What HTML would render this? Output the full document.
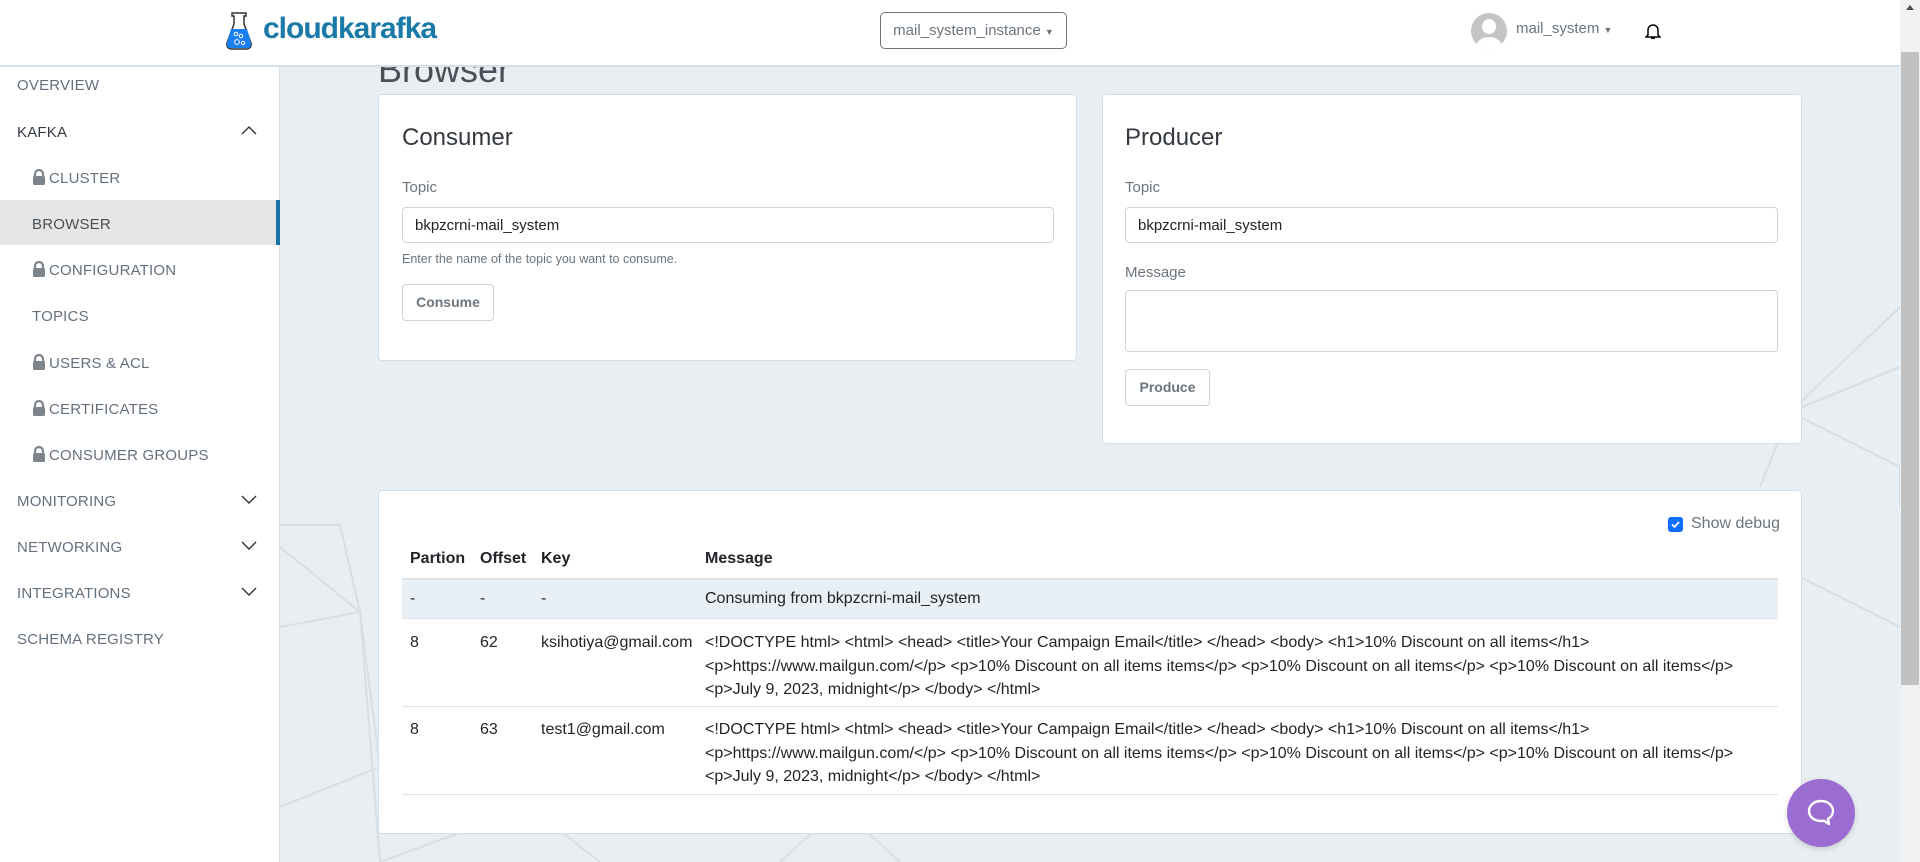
<!DOCTYPE html>
<html><head><meta charset="utf-8">
<style>
*{box-sizing:border-box;margin:0;padding:0}
body{width:1920px;height:862px;overflow:hidden;background:#e8eef2;font-family:"Liberation Sans",sans-serif;position:relative;color:#212529}
.hdr{position:absolute;left:0;top:0;width:1900px;height:67px;background:#fff;border-bottom:2px solid #d5e0e8;z-index:5}
.side{position:absolute;left:0;top:67px;width:280px;height:795px;background:#fff;border-right:1px solid #d5dde3;z-index:3}
.si{position:absolute;left:17px;font-size:15px;color:#65707d;letter-spacing:0.2px}
.si.sub{left:32px}
.lock{display:inline-block;width:14px;height:16px;vertical-align:-2px;margin-right:3px}
.chev{position:absolute;left:241px;width:16px;height:10px}
.card{position:absolute;background:#fff;border:1px solid #d6dee5;border-radius:4px}
.h{position:absolute;font-size:24px;color:#343a40}
.lbl{position:absolute;font-size:15px;color:#6c757d}
.inp{position:absolute;border:1px solid #ced4da;border-radius:4px;background:#fff;font-size:15px;color:#212529;padding:9px 12px}
.btn{position:absolute;border:1px solid #ced4da;border-radius:4px;font-size:14px;font-weight:bold;color:#6c757d;text-align:center;line-height:35px}
.t{position:absolute;font-size:16px;color:#212529;white-space:nowrap}
.b{font-weight:bold}
.line{position:absolute;height:1px;background:#dee2e6;left:402px;width:1376px}
</style></head><body>
<svg style="position:absolute;left:280px;top:67px" width="1620" height="795">
<g stroke="#d7dfe4" stroke-width="2" fill="none">
<polyline points="0,458 60,458 80,545 0,560"/>
<polyline points="0,480 80,545 100,700 0,740"/>
<polyline points="80,545 100,795"/>
<polyline points="1480,420 1510,345 1620,300"/>
<polyline points="1510,345 1620,400 1620,440"/>
<polyline points="1510,345 1620,240"/>
<polyline points="1480,490 1620,560"/>
<polyline points="100,795 250,740 320,795"/>
<polyline points="500,795 560,740 620,795"/>
</g></svg>
<div class="hdr">
<svg style="position:absolute;left:226px;top:12px" width="26" height="38" viewBox="0 0 26 38">
<path d="M6 1h14v3h-2v8l7 19q1 5-4 6H5q-5-1-4-6l7-19V4H6z" fill="#fff" stroke="#333" stroke-width="1.5"/>
<path d="M5 17h16l4 14q1 5-4 5H5q-5 0-4-5z" fill="#1a7ff0"/>
<circle cx="10" cy="22" r="1.8" fill="none" stroke="#fff"/><circle cx="15" cy="24" r="1.8" fill="none" stroke="#fff"/><circle cx="11" cy="30" r="2.4" fill="none" stroke="#fff"/><circle cx="17" cy="31" r="1.6" fill="none" stroke="#fff"/>
</svg>
<div style="position:absolute;left:263px;top:12px;font-size:30px;font-weight:bold;color:#1b79a8;letter-spacing:-1px">cloudkarafka</div>
<div style="position:absolute;left:880px;top:12px;width:187px;height:37px;border:1px solid #6c757d;border-radius:5px;font-size:15px;color:#6c757d;text-align:center;line-height:35px">mail_system_instance <span style="font-size:9px">▼</span></div>
<div style="position:absolute;left:1471px;top:13px;width:36px;height:36px;border-radius:50%;background:#c4c4c4;overflow:hidden">
<div style="position:absolute;left:11px;top:6px;width:14px;height:15px;border-radius:50%;background:#fff"></div>
<div style="position:absolute;left:5px;top:24px;width:26px;height:20px;border-radius:50%;background:#fff"></div></div>
<div style="position:absolute;left:1516px;top:20px;font-size:15px;color:#6c757d">mail_system <span style="font-size:9px">▼</span></div>
<svg style="position:absolute;left:1645px;top:22px" width="16" height="18" viewBox="0 0 16 18"><path d="M3 13V8a5 5 0 0 1 10 0v5l2 2H1z" fill="none" stroke="#000" stroke-width="1.5"/><path d="M6 16h4" stroke="#000" stroke-width="1.8"/></svg>
</div>
<div style="position:absolute;left:1900px;top:0;width:20px;height:862px;background:#f1f1f1;z-index:6">
<div style="position:absolute;left:1px;top:52px;width:18px;height:633px;background:#c1c1c1"></div>
<div style="position:absolute;left:6px;top:5px;border:4px solid transparent;border-bottom:5px solid #505050;border-top:0"></div></div>

<div style="position:absolute;left:378px;top:52px;font-size:36px;line-height:36px;color:#495057;z-index:1">Browser</div>

<div class="side">
<div class="si" style="top:10px">OVERVIEW</div>
<div class="si" style="top:57px;color:#343a40">KAFKA</div>
<svg class="chev" style="top:58px" viewBox="0 0 16 10"><path d="M1 9l7-7 7 7" stroke="#333" stroke-width="1.4" fill="none"/></svg>
<div class="si sub" style="top:102px"><svg class="lock" viewBox="0 0 14 16"><path d="M3 7V5a4 4 0 0 1 8 0v2" stroke="#7d848c" stroke-width="2.2" fill="none"/><rect x="1" y="7" width="12" height="9" rx="1.5" fill="#7d848c"/></svg>CLUSTER</div>
<div style="position:absolute;left:0;top:133px;width:280px;height:45px;background:#e6e6e6;border-right:4px solid #1a73a8"></div>
<div class="si sub" style="top:149px;color:#495057">BROWSER</div>
<div class="si sub" style="top:194px"><svg class="lock" viewBox="0 0 14 16"><path d="M3 7V5a4 4 0 0 1 8 0v2" stroke="#7d848c" stroke-width="2.2" fill="none"/><rect x="1" y="7" width="12" height="9" rx="1.5" fill="#7d848c"/></svg>CONFIGURATION</div>
<div class="si sub" style="top:241px">TOPICS</div>
<div class="si sub" style="top:287px"><svg class="lock" viewBox="0 0 14 16"><path d="M3 7V5a4 4 0 0 1 8 0v2" stroke="#7d848c" stroke-width="2.2" fill="none"/><rect x="1" y="7" width="12" height="9" rx="1.5" fill="#7d848c"/></svg>USERS &amp; ACL</div>
<div class="si sub" style="top:333px"><svg class="lock" viewBox="0 0 14 16"><path d="M3 7V5a4 4 0 0 1 8 0v2" stroke="#7d848c" stroke-width="2.2" fill="none"/><rect x="1" y="7" width="12" height="9" rx="1.5" fill="#7d848c"/></svg>CERTIFICATES</div>
<div class="si sub" style="top:379px"><svg class="lock" viewBox="0 0 14 16"><path d="M3 7V5a4 4 0 0 1 8 0v2" stroke="#7d848c" stroke-width="2.2" fill="none"/><rect x="1" y="7" width="12" height="9" rx="1.5" fill="#7d848c"/></svg>CONSUMER GROUPS</div>
<div class="si" style="top:426px">MONITORING</div>
<svg class="chev" style="top:428px" viewBox="0 0 16 10"><path d="M1 1l7 7 7-7" stroke="#333" stroke-width="1.4" fill="none"/></svg>
<div class="si" style="top:472px">NETWORKING</div>
<svg class="chev" style="top:474px" viewBox="0 0 16 10"><path d="M1 1l7 7 7-7" stroke="#333" stroke-width="1.4" fill="none"/></svg>
<div class="si" style="top:518px">INTEGRATIONS</div>
<svg class="chev" style="top:520px" viewBox="0 0 16 10"><path d="M1 1l7 7 7-7" stroke="#333" stroke-width="1.4" fill="none"/></svg>
<div class="si" style="top:564px">SCHEMA REGISTRY</div>
</div>

<div class="card" style="left:378px;top:94px;width:699px;height:267px"></div>
<div class="h" style="left:402px;top:124px">Consumer</div>
<div class="lbl" style="left:402px;top:179px">Topic</div>
<div class="inp" style="left:402px;top:207px;width:652px;height:36px">bkpzcrni-mail_system</div>
<div style="position:absolute;left:402px;top:252px;font-size:12.5px;color:#6c757d">Enter the name of the topic you want to consume.</div>
<div class="btn" style="left:402px;top:284px;width:92px;height:37px">Consume</div>

<div class="card" style="left:1102px;top:94px;width:700px;height:350px"></div>
<div class="h" style="left:1125px;top:124px">Producer</div>
<div class="lbl" style="left:1125px;top:179px">Topic</div>
<div class="inp" style="left:1125px;top:207px;width:653px;height:36px">bkpzcrni-mail_system</div>
<div class="lbl" style="left:1125px;top:264px">Message</div>
<div class="inp" style="left:1125px;top:290px;width:653px;height:62px"></div>
<div class="btn" style="left:1125px;top:369px;width:85px;height:37px">Produce</div>

<div class="card" style="left:378px;top:490px;width:1424px;height:344px"></div>
<div style="position:absolute;left:1668px;top:517px;width:15px;height:15px;border-radius:3px;background:#0d6efd"><svg width="15" height="15"><path d="M4 7.5l2.5 2.5 4.5-5" stroke="#fff" stroke-width="1.8" fill="none"/></svg></div>
<div style="position:absolute;left:1691px;top:515px;font-size:16px;color:#6c757d">Show debug</div>
<div class="t b" style="left:410px;top:550px">Partion</div>
<div class="t b" style="left:480px;top:550px">Offset</div>
<div class="t b" style="left:541px;top:550px">Key</div>
<div class="t b" style="left:705px;top:550px">Message</div>
<div style="position:absolute;left:402px;top:578px;width:1376px;height:41px;background:#e8eff5;border-top:2px solid #dee2e6;border-bottom:1px solid #dee2e6"></div>
<div class="t" style="left:410px;top:590px">-</div><div class="t" style="left:480px;top:590px">-</div><div class="t" style="left:541px;top:590px">-</div>
<div class="t" style="left:705px;top:590px">Consuming from bkpzcrni-mail_system</div>
<div class="t" style="left:410px;top:631px;line-height:23.5px">8</div><div class="t" style="left:480px;top:631px;line-height:23.5px">62</div><div class="t" style="left:541px;top:631px;line-height:23.5px">ksihotiya@gmail.com</div>
<div class="t" style="left:705px;top:631px;line-height:23.5px">&lt;!DOCTYPE html&gt; &lt;html&gt; &lt;head&gt; &lt;title&gt;Your Campaign Email&lt;/title&gt; &lt;/head&gt; &lt;body&gt; &lt;h1&gt;10% Discount on all items&lt;/h1&gt;<br>&lt;p&gt;https://www.mailgun.com/&lt;/p&gt; &lt;p&gt;10% Discount on all items items&lt;/p&gt; &lt;p&gt;10% Discount on all items&lt;/p&gt; &lt;p&gt;10% Discount on all items&lt;/p&gt;<br>&lt;p&gt;July 9, 2023, midnight&lt;/p&gt; &lt;/body&gt; &lt;/html&gt;</div>
<div class="line" style="top:706px"></div>
<div class="t" style="left:410px;top:718px;line-height:23.5px">8</div><div class="t" style="left:480px;top:718px;line-height:23.5px">63</div><div class="t" style="left:541px;top:718px;line-height:23.5px">test1@gmail.com</div>
<div class="t" style="left:705px;top:718px;line-height:23.5px">&lt;!DOCTYPE html&gt; &lt;html&gt; &lt;head&gt; &lt;title&gt;Your Campaign Email&lt;/title&gt; &lt;/head&gt; &lt;body&gt; &lt;h1&gt;10% Discount on all items&lt;/h1&gt;<br>&lt;p&gt;https://www.mailgun.com/&lt;/p&gt; &lt;p&gt;10% Discount on all items items&lt;/p&gt; &lt;p&gt;10% Discount on all items&lt;/p&gt; &lt;p&gt;10% Discount on all items&lt;/p&gt;<br>&lt;p&gt;July 9, 2023, midnight&lt;/p&gt; &lt;/body&gt; &lt;/html&gt;</div>
<div class="line" style="top:794px"></div>

<div style="position:absolute;left:1787px;top:779px;width:68px;height:68px;border-radius:50%;background:#9b6dd3;box-shadow:0 2px 6px rgba(0,0,0,.15);z-index:4">
<svg style="position:absolute;left:19px;top:19px" width="30" height="30" viewBox="0 0 30 30"><path d="M15 3C8 3 3 7.5 3 13s5 10 12 10c1 0 2 0 3-.3l5 3.3-1-5c3-2 5-5 5-8 0-5.5-5-10-12-10z" fill="none" stroke="#fff" stroke-width="2.4" stroke-linejoin="round"/></svg></div>
</body></html>
